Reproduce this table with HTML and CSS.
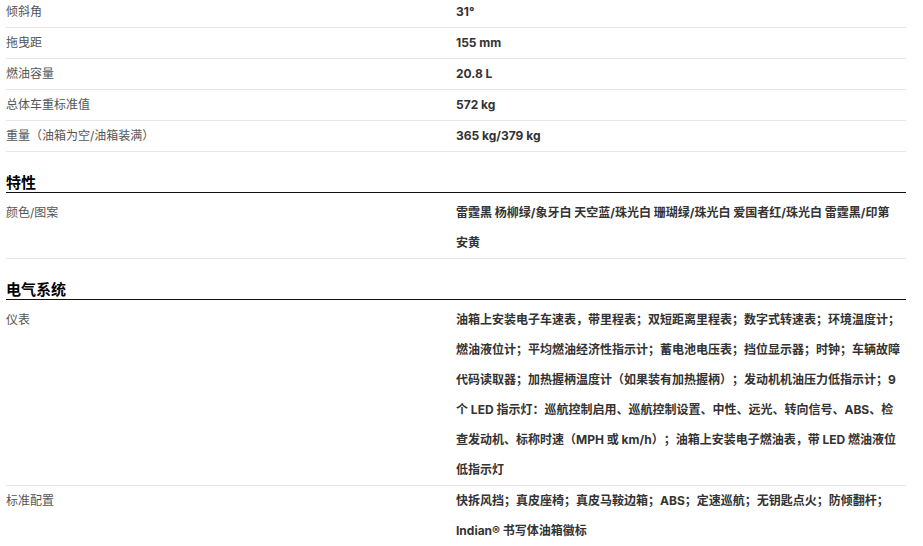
FILE: index.html
```html
<!DOCTYPE html>
<html lang="zh-CN">
<head>
<meta charset="utf-8">
<title>规格</title>
<link rel="stylesheet" href="styles.css">
</head>
<body>
<main class="specs">
  <section class="group group-first">
    <div class="row"><div class="label">倾斜角</div><div class="value">31°</div></div>
    <div class="row"><div class="label">拖曳距</div><div class="value">155 mm</div></div>
    <div class="row"><div class="label">燃油容量</div><div class="value">20.8 L</div></div>
    <div class="row"><div class="label">总体车重标准值</div><div class="value">572 kg</div></div>
    <div class="row"><div class="label">重量（油箱为空/油箱装满）</div><div class="value">365 kg/379 kg</div></div>
  </section>

  <h2 class="heading">特性</h2>
  <section class="group">
    <div class="row"><div class="label">颜色/图案</div><div class="value">雷霆黑 杨柳绿/象牙白 天空蓝/珠光白 珊瑚绿/珠光白 爱国者红/珠光白 雷霆黑/印第安黄</div></div>
  </section>

  <h2 class="heading">电气系统</h2>
  <section class="group">
    <div class="row"><div class="label">仪表</div><div class="value">油箱上安装电子车速表，带里程表；双短距离里程表；数字式转速表；环境温度计；燃油液位计；平均燃油经济性指示计；蓄电池电压表；挡位显示器；时钟；车辆故障代码读取器；加热握柄温度计（如果装有加热握柄）；发动机机油压力低指示计；9 个 LED 指示灯：巡航控制启用、巡航控制设置、中性、远光、转向信号、ABS、检查发动机、标称时速（MPH 或 km/h）；油箱上安装电子燃油表，带 LED 燃油液位低指示灯</div></div>
    <div class="row"><div class="label">标准配置</div><div class="value">快拆风挡；真皮座椅；真皮马鞍边箱；ABS；定速巡航；无钥匙点火；防倾翻杆；Indian® 书写体油箱徽标</div></div>
  </section>
</main>
</body>
</html>
```

FILE: styles.css
```css
html, body {
  margin: 0;
  padding: 0;
  background: #ffffff;
}

body {
  font-family: "Inter", "Noto Sans CJK SC", sans-serif;
  font-size: 12px;
  color: #333333;
  text-spacing-trim: space-all;
}

.specs {
  width: 900px;
  padding: 0 6px;
}

.group {
  margin-top: 5px;
}

.group-first {
  margin-top: -3px;
}

.row {
  display: grid;
  grid-template-columns: 450px 450px;
  border-bottom: 1px solid #e6e6e6;
  line-height: 30px;
}

.label {
  color: #555555;
  font-weight: 400;
}

.value {
  color: #333333;
  font-weight: 700;
  padding-right: 5px;
}

.heading {
  margin: 20px 0 0;
  font-size: 15px;
  line-height: 20px;
  font-weight: 700;
  color: #000000;
  border-bottom: 1px solid #111111;
  font-family: "Noto Sans CJK SC", sans-serif;
}
```
